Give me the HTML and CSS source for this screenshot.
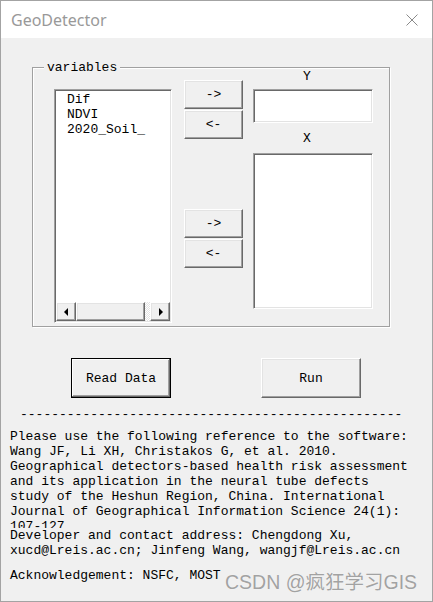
FILE: index.html
```html
<!DOCTYPE html>
<html lang="en">
<head>
    <meta charset="UTF-8">
    <meta name="viewport" content="width=device-width, initial-scale=1.0">
    <title>GeoDetector</title>
    <link rel="stylesheet" href="styles.css">
</head>
<body>
    <div class="window">
        <div class="titlebar">
            <span class="title">GeoDetector</span>
            <svg class="close" width="12" height="12" viewBox="0 0 12 12">
                <path d="M0.5 0.5 L11.5 11.5 M11.5 0.5 L0.5 11.5" stroke="#8a8a8a" stroke-width="1" fill="none"/>
            </svg>
        </div>

        <div class="client">
            <div class="groupbox">
                <span class="legend">variables</span>
                <div class="group-row">
                    <div class="listbox">
                        <div class="items">
                            <div>Dif</div>
                            <div>NDVI</div>
                            <div>2020_Soil_</div>
                        </div>
                        <div class="hscroll">
                            <div class="sb-btn">
                                <svg width="5" height="8" viewBox="0 0 5 8"><path d="M4 0 L0 4 L4 8 Z" fill="#000"/></svg>
                            </div>
                            <div class="sb-thumb"></div>
                            <div class="sb-track"></div>
                            <div class="sb-btn">
                                <svg width="5" height="8" viewBox="0 0 5 8"><path d="M1 0 L5 4 L1 8 Z" fill="#000"/></svg>
                            </div>
                        </div>
                    </div>

                    <div class="move-buttons">
                        <div class="pair">
                            <button class="btn">-&gt;</button>
                            <button class="btn">&lt;-</button>
                        </div>
                        <div class="pair lower">
                            <button class="btn">-&gt;</button>
                            <button class="btn">&lt;-</button>
                        </div>
                    </div>

                    <div class="targets">
                        <div class="field-label">Y</div>
                        <div class="textbox"></div>
                        <div class="field-label x-label">X</div>
                        <div class="x-list"></div>
                    </div>
                </div>
            </div>

            <div class="actions">
                <button class="btn big default">Read Data</button>
                <button class="btn big">Run</button>
            </div>

            <div class="divider">-------------------------------------------------</div>

            <div class="reference">
                Please use the following reference to the software:<br>
                Wang JF, Li XH, Christakos G, et al. 2010.<br>
                Geographical detectors-based health risk assessment<br>
                and its application in the neural tube defects<br>
                study of the Heshun Region, China. International<br>
                Journal of Geographical Information Science 24(1):<br>
                107-127
            </div>
            <div class="contact">
                Developer and contact address: Chengdong Xu,<br>
                xucd@Lreis.ac.cn; Jinfeng Wang, wangjf@Lreis.ac.cn
            </div>
            <div class="ack">Acknowledgement: NSFC, MOST</div>
        </div>

        <div class="watermark">CSDN @疯狂学习GIS</div>
    </div>
</body>
</html>
```

FILE: styles.css
```css
body {
    margin: 0;
    padding: 0;
    background-color: #ffffff;
}

.window {
    position: relative;
    width: 433px;
    height: 602px;
    box-sizing: border-box;
    border: 1px solid #a3a3a3;
    background-color: #f0f0f0;
    font-family: "Liberation Mono", "DejaVu Sans Mono", monospace;
    font-size: 13px;
    line-height: 15px;
    color: #000;
    overflow: hidden;
}

.titlebar {
    height: 37px;
    background-color: #fff;
    display: flex;
    align-items: center;
    padding: 0 14px 0 10px;
}

.title {
    font-family: "Noto Sans", "Open Sans", sans-serif;
    font-size: 16px;
    line-height: normal;
    color: #999;
}

.close {
    margin-left: auto;
}

.client {
    height: 563px;
}

/* group box with etched frame */
.groupbox {
    position: relative;
    margin: 29px 0 0 31px;
    width: 358px;
    height: 260px;
    box-sizing: border-box;
    border: 1px solid #a0a0a0;
    box-shadow: inset 1px 1px #fff, 1px 1px #fff;
}

.legend {
    position: absolute;
    top: -8px;
    left: 11px;
    padding: 0 3px;
    background-color: #f0f0f0;
}

.group-row {
    display: flex;
    align-items: flex-start;
    padding: 1px 0 0 21px;
}

/* sunken controls */
.listbox, .textbox, .x-list {
    box-sizing: border-box;
    background-color: #fff;
    border-top: 1px solid #a0a0a0;
    border-left: 1px solid #a0a0a0;
    border-right: 1px solid #fff;
    border-bottom: 1px solid #fff;
    box-shadow: inset 1px 1px #696969, inset -1px -1px #e3e3e3;
}

.listbox {
    width: 118px;
    height: 234px;
    margin-top: 20px;
    padding: 1px 1px 1px 1px;
    display: flex;
    flex-direction: column;
}

.items {
    padding: 1px 0 0 11px;
    flex: 1;
}

.hscroll {
    display: flex;
    height: 19px;
}

.sb-btn, .sb-thumb, .btn {
    box-sizing: border-box;
    background-color: #f0f0f0;
    border-top: 1px solid #fff;
    border-left: 1px solid #fff;
    border-right: 1px solid #696969;
    border-bottom: 1px solid #696969;
    box-shadow: inset -1px -1px #a0a0a0, inset 1px 1px #e3e3e3;
}

.sb-btn {
    width: 20px;
    display: flex;
    align-items: center;
    justify-content: center;
}

.sb-thumb {
    width: 69px;
}

.sb-track {
    flex: 1;
    background: repeating-conic-gradient(#fff 0 25%, #e3e3e3 0 50%) 0 0 / 2px 2px;
}

/* push buttons */
.btn {
    font-family: inherit;
    font-size: 13px;
    line-height: 15px;
    color: #000;
    padding: 0;
    margin: 0;
    cursor: pointer;
}

.move-buttons {
    width: 59px;
    margin: 11px 0 0 12px;
}

.pair {
    display: flex;
    flex-direction: column;
    gap: 1px;
}

.pair .btn {
    height: 29px;
}

.pair.lower {
    margin-top: 70px;
}

.targets {
    width: 120px;
    margin-left: 10px;
}

.field-label {
    padding-left: 50px;
}

.textbox {
    height: 34px;
    margin-top: 5px;
}

.x-label {
    margin-top: 8px;
}

.x-list {
    height: 156px;
    margin-top: 7px;
}

.actions {
    display: flex;
    gap: 90px;
    margin-top: 31px;
    padding-left: 70px;
}

.btn.big {
    width: 100px;
    height: 40px;
}

.btn.default {
    border: 1px solid #000;
    box-shadow: inset -1px -1px #696969, inset 1px 1px #fff, inset -2px -2px #a0a0a0;
}

.divider {
    margin-top: 9px;
    padding-left: 19px;
    white-space: nowrap;
}

.reference {
    margin-top: 7px;
    padding-left: 9px;
    height: 99px;
    overflow: hidden;
}

.contact {
    padding-left: 9px;
}

.ack {
    margin-top: 10px;
    padding-left: 9px;
}

.watermark {
    position: absolute;
    left: 224px;
    top: 569px;
    font-family: "Liberation Sans", "Noto Sans CJK SC", sans-serif;
    font-size: 19.5px;
    line-height: 24px;
    color: #a2a2a2;
    text-shadow: 0 0 1px #fff;
    white-space: nowrap;
}
```
